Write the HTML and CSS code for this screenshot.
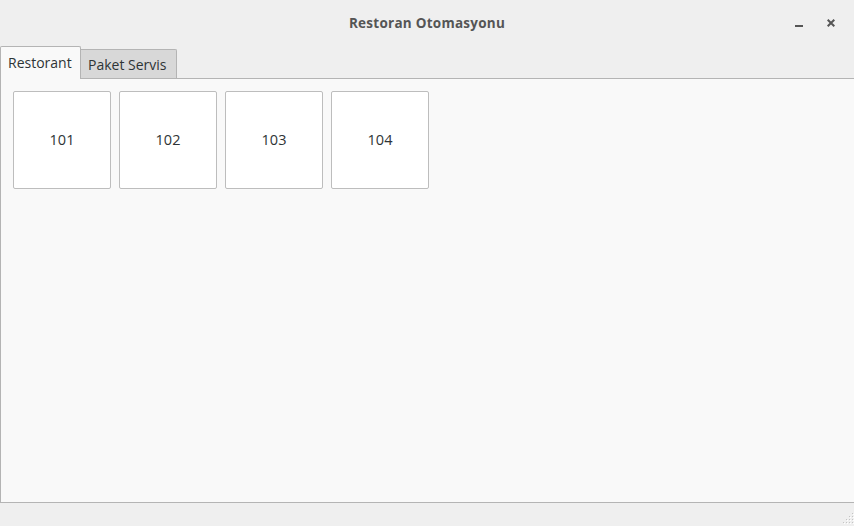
FILE: index.html
```html
<!DOCTYPE html>
<html lang="tr">
<head>
<meta charset="utf-8">
<title>Restoran Otomasyonu</title>
<link rel="stylesheet" href="styles.css">
</head>
<body>
<div class="window">
  <header class="titlebar">
    <div class="title">Restoran Otomasyonu</div>
    <div class="controls">
      <button class="wbtn" aria-label="Simge durumuna küçült">
        <svg width="8" height="8" viewBox="0 0 8 8"><rect x="0" y="6" width="8" height="2" fill="#555"/></svg>
      </button>
      <button class="wbtn" aria-label="Kapat">
        <svg width="8" height="8" viewBox="0 0 8 8"><path d="M0.7 0.7 L7.3 7.3 M7.3 0.7 L0.7 7.3" stroke="#555" stroke-width="2" fill="none"/></svg>
      </button>
    </div>
  </header>
  <nav class="tabs">
    <div class="tab active">Restorant</div>
    <div class="tab">Paket Servis</div>
  </nav>
  <main class="panel">
    <div class="tables">
      <button class="table">101</button>
      <button class="table">102</button>
      <button class="table">103</button>
      <button class="table">104</button>
    </div>
  </main>
  <footer class="statusbar">
    <svg class="grip" width="12" height="12" viewBox="0 0 12 12">
      <g fill="#c4c4c4">
        <rect x="10" y="1" width="1" height="1"/>
        <rect x="7" y="4" width="1" height="1"/><rect x="10" y="4" width="1" height="1"/>
        <rect x="4" y="7" width="1" height="1"/><rect x="7" y="7" width="1" height="1"/><rect x="10" y="7" width="1" height="1"/>
        <rect x="1" y="10" width="1" height="1"/><rect x="4" y="10" width="1" height="1"/><rect x="7" y="10" width="1" height="1"/><rect x="10" y="10" width="1" height="1"/>
      </g>
      <g fill="#ffffff">
        <rect x="11" y="2" width="1" height="1"/>
        <rect x="8" y="5" width="1" height="1"/><rect x="11" y="5" width="1" height="1"/>
        <rect x="5" y="8" width="1" height="1"/><rect x="8" y="8" width="1" height="1"/><rect x="11" y="8" width="1" height="1"/>
        <rect x="2" y="11" width="1" height="1"/><rect x="5" y="11" width="1" height="1"/><rect x="8" y="11" width="1" height="1"/><rect x="11" y="11" width="1" height="1"/>
      </g>
    </svg>
  </footer>
</div>
</body>
</html>
```

FILE: styles.css
```css
html, body {
  margin: 0;
  padding: 0;
  background: #efefef;
}

body {
  font-family: "Open Sans", "Noto Sans", sans-serif;
  color: #2e3436;
}

.window {
  width: 854px;
  height: 526px;
  display: flex;
  flex-direction: column;
  background: #efefef;
}

.titlebar {
  height: 46px;
  flex: 0 0 46px;
  display: flex;
  align-items: center;
  justify-content: center;
  position: relative;
}

.title {
  font-weight: bold;
  font-size: 13.5px;
  letter-spacing: 0.25px;
  color: #555555;
}

.controls {
  position: absolute;
  right: 19px;
  top: 19px;
  display: flex;
  gap: 24px;
}

.wbtn {
  border: 0;
  background: none;
  padding: 0;
  width: 8px;
  height: 8px;
  display: block;
}

.wbtn svg {
  display: block;
}

.tabs {
  height: 32px;
  flex: 0 0 32px;
  display: flex;
  align-items: flex-end;
  position: relative;
  z-index: 1;
}

.tab {
  font-size: 14px;
  box-sizing: border-box;
  height: 29px;
  padding: 0 9px 0 7px;
  background: #d8d8d8;
  border: 1px solid #b4b4b4;
  border-left: 0;
  border-bottom: 0;
  border-radius: 0 2px 0 0;
  display: flex;
  align-items: center;
  color: #2e3436;
}

.tab.active {
  height: 33px;
  margin-bottom: -1px;
  background: #f9f9f9;
  border-left: 1px solid #b4b4b4;
  border-radius: 2px 2px 0 0;
  padding: 0 7px 1px 7px;
  width: 81px;
}

.panel {
  flex: 1 1 auto;
  box-sizing: border-box;
  background: #f9f9f9;
  border-top: 1px solid #b4b4b4;
  border-left: 1px solid #b4b4b4;
  border-bottom: 1px solid #b4b4b4;
  padding: 12px 12px;
}

.tables {
  display: flex;
  gap: 8px;
}

.table {
  box-sizing: border-box;
  width: 98px;
  height: 98px;
  background: #ffffff;
  border: 1px solid #bdbdbd;
  border-radius: 2px;
  font-family: "Open Sans", "Noto Sans", sans-serif;
  font-size: 14.5px;
  color: #2e3436;
  padding: 0 0 2px 0;
}

.statusbar {
  height: 23px;
  flex: 0 0 23px;
  display: flex;
  justify-content: flex-end;
  align-items: flex-end;
}

.grip {
  display: block;
  margin: 0 0 2px 0;
}
```
